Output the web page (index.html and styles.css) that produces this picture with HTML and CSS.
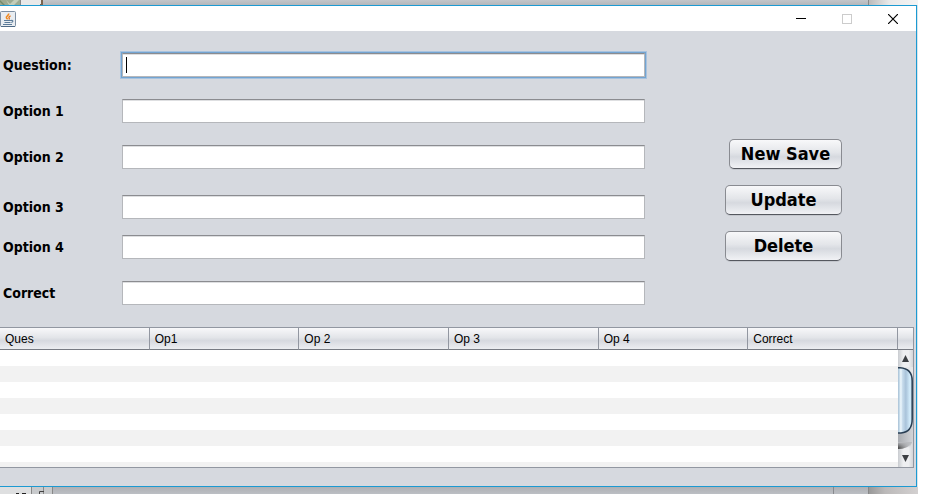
FILE: index.html
```html
<!DOCTYPE html>
<html lang="en">
<head>
<meta charset="utf-8">
<title>Question editor</title>
<link rel="stylesheet" href="styles.css">
</head>
<body>
<div class="desktop">
  <div class="strip strip-top" aria-hidden="true">
    <svg class="strip-art" width="44" height="5" viewBox="0 0 44 5"><path fill="#9caa91" d="M0 0h20v5H0z"/><path fill="#c4ceb9" d="M6 0l3 5h5l5-5h-5l-4 4z"/><path fill="#74896c" d="M0 0l5 5H3L0 2z"/><path fill="#888" d="M20 0h1v5h-1z"/><path fill="#e9e9e9" d="M21 0h21v5H21z"/><path fill="#79634e" d="M41 0h2v5h-3V4h1z"/></svg>
    <span class="strip-page"></span>
  </div>
  <main class="window">
    <header class="titlebar">
      <svg class="app-icon" width="16" height="16" viewBox="0 0 16 16" aria-hidden="true"><rect x=".5" y=".5" width="15" height="15" rx="1" fill="#e9edf1" stroke="#7d8fa3"/><path d="M1 15.500h14" stroke="#4f6a86"/><path d="M8.600 2.500c.8 2-3 2.500-2.200 4.200.3.700.9 1 1.200 1.700" fill="none" stroke="#f18a1d" stroke-width="1.600"/><path d="M10.600 4.800c-1.900.8-2.100 1.500-1.300 2.400.3.500 0 .8-.5 1.300" fill="none" stroke="#e8761c" stroke-width="1.300"/><path d="M4 9.500h7M4.500 11.500h6M3 13.500h9M11 9.500c2.500-.7 2.500 1.500.3 2" fill="none" stroke="#5b7b99" stroke-width="1.100"/></svg>
      <div class="window-controls">
        <button class="control" aria-label="Minimize"><svg width="10" height="10" viewBox="0 0 10 10"><path d="M0 4.500h10" stroke="#000"/></svg></button>
        <button class="control" aria-label="Maximize" disabled><svg width="10" height="10" viewBox="0 0 10 10"><rect x=".5" y=".5" width="9" height="9" fill="none" stroke="#ccc"/></svg></button>
        <button class="control" aria-label="Close"><svg width="10" height="10" viewBox="0 0 10 10"><path d="M0 0l10 10M10 0L0 10" stroke="#000" stroke-width="1.200"/></svg></button>
      </div>
    </header>
    <form class="editor">
      <div class="fields">
        <div class="row"><label for="question">Question:</label><div class="entry"><input id="question" class="field focused" type="text"><span class="caret" aria-hidden="true"></span></div></div>
        <div class="row"><label for="option1">Option 1</label><input id="option1" class="field" type="text"></div>
        <div class="row"><label for="option2">Option 2</label><input id="option2" class="field" type="text"></div>
        <div class="row row-loose"><label for="option3">Option 3</label><input id="option3" class="field" type="text"></div>
        <div class="row row-tight"><label for="option4">Option 4</label><input id="option4" class="field" type="text"></div>
        <div class="row"><label for="correct">Correct</label><input id="correct" class="field" type="text"></div>
      </div>
      <div class="actions">
        <button class="action compact" type="button">New Save</button>
        <button class="action" type="button">Update</button>
        <button class="action" type="button">Delete</button>
      </div>
    </form>
    <section class="grid-pane">
      <div class="table-area">
        <table class="questions">
          <thead><tr><th>Ques</th><th>Op1</th><th>Op 2</th><th>Op 3</th><th>Op 4</th><th>Correct</th></tr></thead>
          <tbody>
            <tr><td colspan="6"></td></tr><tr><td colspan="6"></td></tr><tr><td colspan="6"></td></tr><tr><td colspan="6"></td></tr>
            <tr><td colspan="6"></td></tr><tr><td colspan="6"></td></tr><tr><td colspan="6"></td></tr><tr><td colspan="6"></td></tr>
          </tbody>
        </table>
      </div>
      <div class="scroll-side">
        <div class="corner"></div>
        <div class="scrollbar">
          <button class="arrow" aria-label="Scroll up"><svg width="15" height="17" viewBox="0 0 15 17"><path fill="#3c3f43" d="M7.500 5l3.500 7H4z"/></svg></button>
          <div class="track">
            <svg width="15" height="83" viewBox="0 0 15 83" aria-hidden="true">
              <defs>
                <linearGradient id="thumb"><stop offset="0" stop-color="#a7c0d5"/><stop offset=".1" stop-color="#c4d9e8"/><stop offset=".2" stop-color="#eff8fd"/><stop offset=".32" stop-color="#c8dcec"/><stop offset=".55" stop-color="#a9c3da"/><stop offset=".85" stop-color="#d4edfc"/><stop offset="1" stop-color="#b5cde0"/></linearGradient>
                <linearGradient id="track"><stop offset="0" stop-color="#a9acb1"/><stop offset="1" stop-color="#d2d4d8"/></linearGradient>
                <linearGradient id="shade"><stop offset="0" stop-color="#444"/><stop offset="1" stop-color="#aaa" stop-opacity="0"/></linearGradient>
                <linearGradient id="fade" x2="0" y2="1"><stop offset="0" stop-color="#b8babe"/><stop offset="1" stop-color="#b8babe" stop-opacity="0"/></linearGradient>
              </defs>
              <path fill="url(#track)" d="M0 0h15v74Q11 82 0 82z"/>
              <path fill="url(#shade)" d="M0 76h14Q9 82 0 82z"/>
              <path fill="url(#fade)" d="M0 75h14l-2 6H0z"/>
              <path fill="#e6e7e9" d="M0 0h15v12Q12 0 0 0z"/>
              <path fill="url(#thumb)" stroke="#293e53" stroke-width="1.500" d="M0 .8h2Q14.200 1.500 14.200 14v38Q14.200 65 3 66H0"/>
            </svg>
          </div>
          <button class="arrow" aria-label="Scroll down"><svg width="15" height="17" viewBox="0 0 15 17"><path fill="#3c3f43" d="M7.500 12L4 5h7z"/></svg></button>
        </div>
      </div>
    </section>
  </main>
  <div class="strip strip-bottom" aria-hidden="true">
    <svg class="strip-art" width="54" height="7" viewBox="0 0 54 7"><path fill="#dedfe0" d="M0 0h31v7H0z"/><path fill="#c8cacc" d="M32 0h21v7H32z"/><path stroke="#888" d="M31.500 0v7M43.500 0v7M52.500 0v7"/><path fill="none" stroke="#444" d="M39.500 7V4.500H44"/><path fill="#222" d="M16 6h3v1h-3zM22 6h4v1h-4z"/></svg>
    <span class="strip-divider"></span>
    <span class="strip-page"></span>
  </div>
</div>
</body>
</html>
```
FILE: styles.css
```css
* { box-sizing: border-box; }

body {
  margin: 0;
  background: #fff;
  color: #000;
  font-family: "Liberation Sans", Arial, sans-serif;
  font-size: 12px;
}

.desktop {
  display: flex;
  flex-direction: column;
  min-height: 100vh;
  margin-right: 9px;
  overflow: hidden;
}

.strip {
  display: flex;
  background: linear-gradient(#c3c6ca, #b4b7bb);
}
.strip-top { height: 5px; }
.strip-bottom { height: 7px; background: linear-gradient(#aeb0b4, #bcbfc4); }
.strip-art { display: block; flex: none; margin-right: auto; }
.strip-page {
  width: 50px;
  border-left: 1px solid #888;
  background: linear-gradient(90deg, #bbb, #e9e9e9 20px, #f4f4f4);
}
.strip-bottom .strip-page { background: linear-gradient(90deg, #999, #bbb9b9 16px, #d3d0d0); }
.strip-divider { width: 35px; border-left: 1px solid #888a8e; }

.window {
  display: flex;
  flex: 1;
  flex-direction: column;
  margin-right: 1px;
  padding-bottom: 18px;
  border: solid #1c9ad2;
  border-width: 1px 1px 1px 0;
  background: #d6d9df;
  box-shadow: 1px 0 #d7e5ec;
}

.titlebar {
  display: flex;
  align-items: center;
  justify-content: space-between;
  height: 25px;
  background: #fff;
}
.app-icon { display: block; }
.window-controls { display: flex; }
.control {
  display: flex;
  align-items: center;
  justify-content: center;
  width: 46px;
  height: 25px;
  padding: 0;
  border: 0;
  background: none;
}

.editor {
  display: flex;
  padding: 22px 74px 22px 3px;
  font-family: "DejaVu Sans Condensed", "DejaVu Sans", sans-serif;
  font-stretch: condensed;
  font-weight: bold;
}
.fields { flex: 1; font-size: 14px; }
.row {
  display: grid;
  grid-template-columns: 119px 1fr;
  align-items: center;
  line-height: 24px;
}
.row + .row { margin-top: 22px; }
.row + .row-loose { margin-top: 26px; }
.row + .row-tight { margin-top: 16px; }
.entry { position: relative; display: flex; }
.field {
  display: block;
  width: 100%;
  height: 24px;
  padding: 2px 4px;
  border: 1px solid #b5b7bb;
  border-top-color: #8b8c90;
  border-radius: 0;
  outline: none;
  background: #fff;
  box-shadow: inset 0 1px #dedfe1;
  font-size: 14px;
}
.focused { box-shadow: inset 0 1px #dedfe1, 0 0 0 1px #73a4d1, 0 0 0 2px #a8c3df; }
.caret {
  position: absolute;
  top: 4px;
  left: 4px;
  width: 1px;
  height: 16px;
  background: #000;
}

.actions {
  display: flex;
  flex-direction: column;
  align-items: flex-end;
  gap: 16px;
  width: 197px;
  padding-top: 86px;
}
.action {
  width: 117px;
  height: 30px;
  padding: 0;
  border: 1px solid #898b91;
  border-bottom-color: #55585f;
  border-radius: 5px;
  background: linear-gradient(#f8f8fa, #e3e5e9 45%, #d6d9df 60%, #f1f2f5);
  box-shadow: 0 1px #c4c7cd;
  color: #000;
  font: inherit;
  font-size: 18px;
  line-height: 28px;
}
.compact { width: 113px; }

.grid-pane {
  display: flex;
  flex: 1;
  margin-right: 2px;
  border: solid #9297a1;
  border-width: 1px 1px 1px 0;
  background: #fff;
}
.table-area { flex: 1; height: 139px; overflow: hidden; }
.questions { width: 100%; border-collapse: separate; border-spacing: 0; table-layout: fixed; }
.questions th,
.corner {
  height: 22px;
  padding: 0 5px;
  border-right: 1px solid #9297a1;
  border-bottom: 1px solid #777b83;
  background: linear-gradient(#f8f8fa, #e3e5e9 45%, #d6d9df 60%, #eceef1);
}
.questions th { font-weight: normal; text-align: left; }
.questions td { height: 16px; padding: 0; }
.questions tbody tr:nth-child(even) { background: #f2f2f2; }

.scroll-side { display: flex; flex-direction: column; width: 15px; }
.corner { border-right: 0; }
.scrollbar {
  display: flex;
  flex: 1;
  flex-direction: column;
  background: linear-gradient(90deg, #c9ccd0, #eeeff1 35%, #eeeff1 70%, #d3d5d9);
}
.arrow { height: 17px; padding: 0; border: 0; background: none; }
.arrow svg, .track svg { display: block; }
.track { flex: 1; }
```
